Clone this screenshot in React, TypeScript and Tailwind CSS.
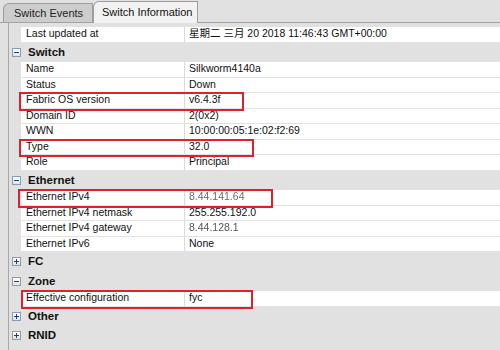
import React from 'react';

// Switch details pane: two tabs on top, a tree table of properties below,
// with red annotation boxes drawn over a few rows.

const FONT = { fontFamily: '"Liberation Sans", "Noto Sans CJK SC", Arial, sans-serif' };

function Expander({ open }: { open: boolean }) {
  return (
    <span className="relative flex w-[9px] h-[9px] shrink-0 items-center justify-center border border-[#8d9bb0] bg-gradient-to-b from-white to-[#dbe3ed]">
      <span className="absolute w-[5px] h-px bg-[#253f6d]" />
      {!open && <span className="absolute w-px h-[5px] bg-[#253f6d]" />}
    </span>
  );
}

function Header({ title, open }: { title: string; open: boolean }) {
  return (
    <div className="flex h-[19.5px] items-center gap-[7px] pl-[3px]">
      <Expander open={open} />
      <span className="text-[11.5px] font-bold text-[#111]">{title}</span>
    </div>
  );
}

type RowProps = {
  label: string;
  value: string;
  box?: string;
  valueClass?: string;
};

function Row({ label, value, box, valueClass }: RowProps) {
  return (
    <div className="relative flex h-[15.5px] pl-[12px]">
      <div className="flex flex-1 bg-white border-b border-[#e2e2e2]">
        <div className="flex w-[164px] items-center border-r border-[#dadada] pl-[5px]">{label}</div>
        <div className={'flex flex-1 items-center pl-[4px] whitespace-nowrap ' + (valueClass ?? '')}>{value}</div>
      </div>
      {box && <div className={'absolute z-10 top-[-1px] bottom-[-2px] border-2 border-[#e0212b] ' + box} />}
    </div>
  );
}

export default function App() {
  return (
    <div className="w-[500px] h-[350px] overflow-hidden bg-[#e1e1e1] text-[10.5px] text-[#111]" style={FONT}>
      {/* Tabs */}
      <div className="flex h-[23px] items-end pl-[3px] border-b border-[#a3a3a3]">
        <div className="flex h-[19px] w-[90px] items-center rounded-tl-[6px] border border-b-0 border-[#9d9d9d] bg-[#cdcdcd] pl-[10px] text-[11px] text-[#222]">
          Switch Events
        </div>
        <div className="relative -mb-px flex h-[22px] w-[105px] items-center rounded-tl-[6px] border border-b-0 border-[#9d9d9d] bg-[#f2f2f2] pl-[8px] text-[11px] text-[#111]">
          Switch Information
        </div>
      </div>

      {/* Property tree */}
      <div className="ml-[8px] h-full border-l border-[#a8a8a8] pt-[4px]">
        <Row label="Last updated at" value="星期二 三月 20 2018 11:46:43 GMT+00:00" />

        <Header title="Switch" open />
        <Row label="Name" value="Silkworm4140a" />
        <Row label="Status" value="Down" />
        <Row label="Fabric OS version" value="v6.4.3f" box="left-[10px] w-[225px]" />
        <Row label="Domain ID" value="2(0x2)" />
        <Row label="WWN" value="10:00:00:05:1e:02:f2:69" />
        <Row label="Type" value="32.0" box="left-[10px] w-[235px]" />
        <Row label="Role" value="Principal" />

        <Header title="Ethernet" open />
        <Row
          label="Ethernet IPv4"
          value="8.44.141.64"
          valueClass="text-[#6a6a6a] blur-[0.4px]"
          box="left-[9px] w-[255px]"
        />
        <Row label="Ethernet IPv4 netmask" value="255.255.192.0" />
        <Row label="Ethernet IPv4 gateway" value="8.44.128.1" valueClass="text-[#555] blur-[0.2px]" />
        <Row label="Ethernet IPv6" value="None" />

        <Header title="FC" open={false} />
        <Header title="Zone" open />
        <Row label="Effective configuration" value="fyc" box="left-[12px] w-[232px]" />
        <Header title="Other" open={false} />
        <Header title="RNID" open={false} />
      </div>
    </div>
  );
}
